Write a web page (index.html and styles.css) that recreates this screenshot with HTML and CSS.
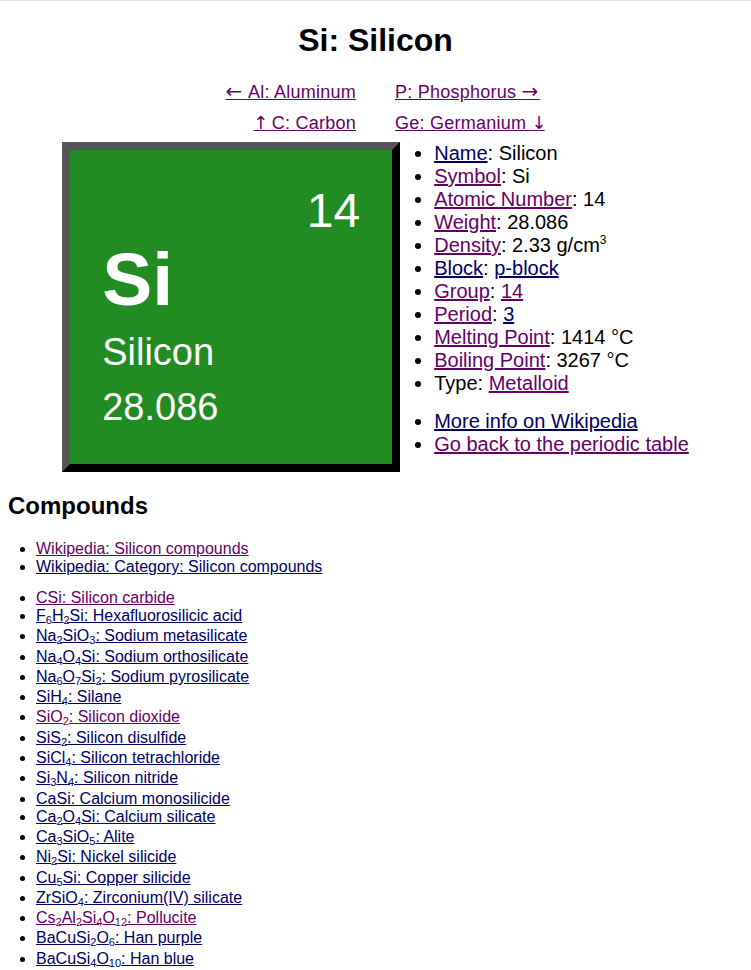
FILE: index.html
```html
<!DOCTYPE html>
<html lang="en">
<head>
<meta charset="utf-8">
<title>Si: Silicon</title>
<link rel="stylesheet" href="styles.css">
</head>
<body>
<h1 class="title">Si: Silicon</h1>
<nav class="nav">
  <div class="nav-l"><a class="v" href="#"><span class="arr arr-h">←</span> Al: Aluminum</a></div>
  <div class="nav-r"><a class="v" href="#">P: Phosphorus <span class="arr arr-h">→</span></a></div>
  <div class="nav-l"><a class="v" href="#"><span class="arr arr-v">↑</span> C: Carbon</a></div>
  <div class="nav-r"><a class="v" href="#">Ge: Germanium <span class="arr arr-v">↓</span></a></div>
</nav>
<div class="element-row">
  <div class="tile">
    <div class="tile-num">14</div>
    <div class="tile-sym">Si</div>
    <div class="tile-name">Silicon</div>
    <div class="tile-weight">28.086</div>
  </div>
  <div class="props-col">
    <ul class="props">
      <li><a class="n" href="#">Name</a>: Silicon</li>
      <li><a class="v" href="#">Symbol</a>: Si</li>
      <li><a class="v" href="#">Atomic Number</a>: 14</li>
      <li><a class="v" href="#">Weight</a>: 28.086</li>
      <li><a class="v" href="#">Density</a>: 2.33 g/cm<sup>3</sup></li>
      <li><a class="n" href="#">Block</a>: <a class="n" href="#">p-block</a></li>
      <li><a class="v" href="#">Group</a>: <a class="v" href="#">14</a></li>
      <li><a class="v" href="#">Period</a>: <a class="n" href="#">3</a></li>
      <li><a class="v" href="#">Melting Point</a>: 1414 °C</li>
      <li><a class="v" href="#">Boiling Point</a>: 3267 °C</li>
      <li>Type: <a class="v" href="#">Metalloid</a></li>
    </ul>
    <ul class="props props-links">
      <li><a class="n" href="#">More info on Wikipedia</a></li>
      <li><a class="v" href="#">Go back to the periodic table</a></li>
    </ul>
  </div>
</div>
<h2 class="section-title">Compounds</h2>
<ul class="cmp">
  <li><a class="v" href="#">Wikipedia: Silicon compounds</a></li>
  <li><a class="n" href="#">Wikipedia: Category: Silicon compounds</a></li>
</ul>
<ul class="cmp cmp-list">
  <li><a class="v" href="#">CSi: Silicon carbide</a></li>
  <li><a class="n" href="#">F<sub>6</sub>H<sub>2</sub>Si: Hexafluorosilicic acid</a></li>
  <li><a class="n" href="#">Na<sub>2</sub>SiO<sub>3</sub>: Sodium metasilicate</a></li>
  <li><a class="n" href="#">Na<sub>4</sub>O<sub>4</sub>Si: Sodium orthosilicate</a></li>
  <li><a class="n" href="#">Na<sub>6</sub>O<sub>7</sub>Si<sub>2</sub>: Sodium pyrosilicate</a></li>
  <li><a class="n" href="#">SiH<sub>4</sub>: Silane</a></li>
  <li><a class="v" href="#">SiO<sub>2</sub>: Silicon dioxide</a></li>
  <li><a class="n" href="#">SiS<sub>2</sub>: Silicon disulfide</a></li>
  <li><a class="n" href="#">SiCl<sub>4</sub>: Silicon tetrachloride</a></li>
  <li><a class="n" href="#">Si<sub>3</sub>N<sub>4</sub>: Silicon nitride</a></li>
  <li><a class="n" href="#">CaSi: Calcium monosilicide</a></li>
  <li><a class="n" href="#">Ca<sub>2</sub>O<sub>4</sub>Si: Calcium silicate</a></li>
  <li><a class="n" href="#">Ca<sub>3</sub>SiO<sub>5</sub>: Alite</a></li>
  <li><a class="n" href="#">Ni<sub>2</sub>Si: Nickel silicide</a></li>
  <li><a class="n" href="#">Cu<sub>5</sub>Si: Copper silicide</a></li>
  <li><a class="n" href="#">ZrSiO<sub>4</sub>: Zirconium(IV) silicate</a></li>
  <li><a class="v" href="#">Cs<sub>2</sub>Al<sub>2</sub>Si<sub>4</sub>O<sub>12</sub>: Pollucite</a></li>
  <li><a class="n" href="#">BaCuSi<sub>2</sub>O<sub>6</sub>: Han purple</a></li>
  <li><a class="n" href="#">BaCuSi<sub>4</sub>O<sub>10</sub>: Han blue</a></li>
</ul>
</body>
</html>
```

FILE: styles.css
```css
html {
  box-shadow: inset 0 1px 0 #e2e2e2;
}
body {
  margin: 0;
  padding: 22px 8px 8px;
  font-family: "Liberation Sans", Arial, Helvetica, sans-serif;
  color: #000;
  background: #fff;
}
a.v { color: #660066; }
a.n { color: #000066; }
a { text-decoration: underline; }

.title {
  font-size: 32px;
  font-weight: bold;
  line-height: 37px;
  text-align: center;
  margin: 0 0 23px;
}

.nav {
  display: grid;
  grid-template-columns: 1fr 1fr;
  column-gap: 39px;
  row-gap: 10px;
  font-size: 18px;
  line-height: 21px;
  letter-spacing: 0.25px;
}
.nav-l { text-align: right; }
.nav-r { text-align: left; }
.arr {
  font-family: "DejaVu Sans", sans-serif;
  line-height: 0;
}
.arr-h {
  font-size: 20px;
  letter-spacing: 1.5px;
}
.arr-v { letter-spacing: -2px; }

.element-row {
  display: flex;
  justify-content: center;
  align-items: flex-start;
  margin-top: 8px;
}

.tile {
  box-sizing: border-box;
  width: 338px;
  height: 330px;
  flex: none;
  border: 8px solid;
  border-color: #555555 #000000 #000000 #555555;
  background: #228b22;
  color: #fff;
  padding: 33px 32px 0 32px;
}
.tile-num {
  font-size: 48px;
  line-height: 55px;
  text-align: right;
}
.tile-sym {
  font-size: 75px;
  font-weight: bold;
  line-height: 82px;
}
.tile-name {
  font-size: 38px;
  line-height: 44px;
  margin-top: 10px;
}
.tile-weight {
  font-size: 38px;
  line-height: 44px;
  margin-top: 11px;
}

.props-col {
  flex: none;
}
.props {
  margin: 0;
  padding-left: 34px;
  font-size: 20px;
  line-height: 23px;
  white-space: nowrap;
}
.props-links {
  margin-top: 15px;
}
.props sup {
  font-size: 12px;
  line-height: 0;
  vertical-align: 8px;
}

.section-title {
  font-size: 24px;
  font-weight: bold;
  margin: 20px 0 20px;
}

.cmp {
  margin: 0;
  padding-left: 28px;
  font-size: 16px;
}
.cmp-list {
  margin-top: 13px;
}
.cmp sub {
  font-size: 11px;
  line-height: 14px;
  vertical-align: -3.3px;
}
```
